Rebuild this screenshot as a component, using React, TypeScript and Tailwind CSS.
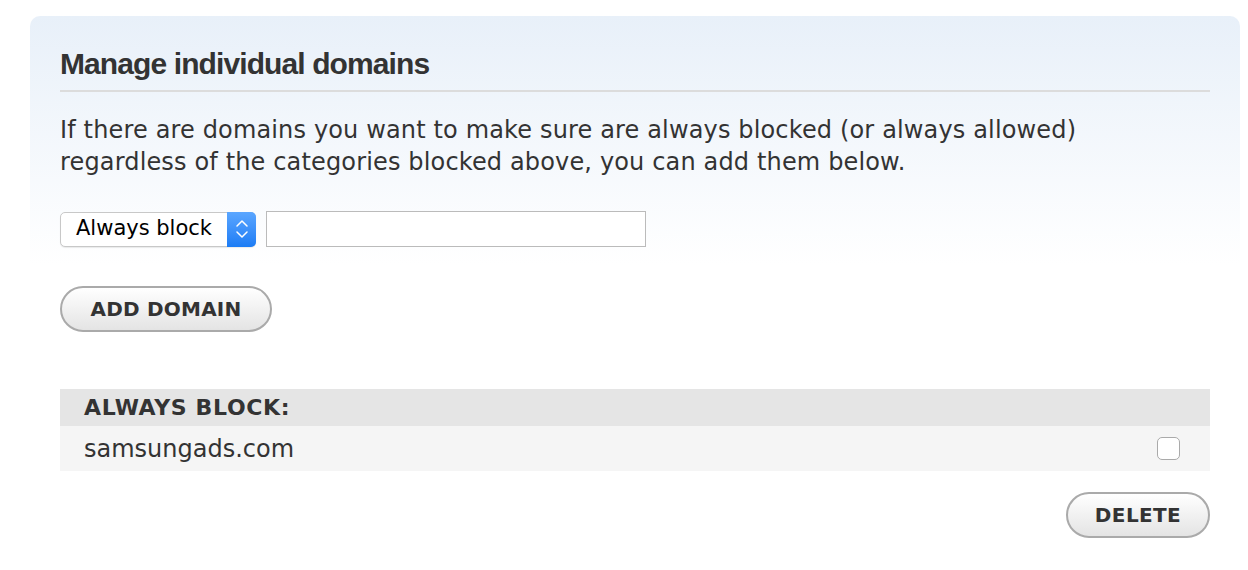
export default function App() {
  return (
    <div className="min-h-[570px] w-[1248px] bg-white pt-4 pl-[30px] pr-2">
      <div className="rounded-t-[10px] bg-gradient-to-b from-[#e8f0f9] to-white to-45% px-[30px] pb-8 pt-[30px]">
        {/* Heading */}
        <h2 className="border-b-2 border-[#dcdcdc] pb-2 font-['Liberation_Sans',Arial,sans-serif] text-[30px] font-bold leading-[36px] tracking-[-0.03em] text-[#333]">
          Manage individual domains
        </h2>
        <p className="mt-[22px] font-['DejaVu_Sans',Verdana,sans-serif] text-[24px] leading-[32px] tracking-[0.15px] text-[#333]">
          If there are domains you want to make sure are always blocked (or always allowed)
          <br />
          regardless of the categories blocked above, you can add them below.
        </p>

        {/* Add form */}
        <div className="mt-[33px] flex items-center gap-[10px]">
          <div className="flex h-[35px] w-[196px] items-center justify-between rounded-[5px] border border-[#c8c8c8] bg-white shadow-[0_1px_1px_rgba(0,0,0,0.08)]">
            <span className="pl-[15px] font-['DejaVu_Sans',Verdana,sans-serif] text-[21px] text-black">
              Always block
            </span>
            <div className="-mr-px flex h-[35px] w-[29px] items-center justify-center rounded-r-[5px] bg-gradient-to-b from-[#5aa6ff] to-[#1a7cf5]">
              <svg width="14" height="24" viewBox="0 0 14 24" fill="none" stroke="white" strokeWidth="1.5" strokeLinecap="round" strokeLinejoin="round">
                <path d="M2 9 L7 4 L12 9" />
                <path d="M2 15 L7 20 L12 15" />
              </svg>
            </div>
          </div>
          <input className="h-[36px] w-[380px] border border-[#bbb] bg-white outline-none" />
        </div>

        <button className="mt-[39px] flex h-[46px] w-[212px] items-center justify-center rounded-full border-2 border-[#aaa] bg-gradient-to-b from-white to-[#e4e4e4] font-['DejaVu_Sans',Verdana,sans-serif] text-[20px] font-bold tracking-[0.01em] text-[#333]">
          ADD DOMAIN
        </button>

        {/* Domain list */}
        <div className="mt-[57px]">
          <div className="flex h-[37px] items-center bg-[#e5e5e5] pl-6 font-['DejaVu_Sans',Verdana,sans-serif] text-[22px] font-bold tracking-[0.03em] text-[#333]">
            ALWAYS BLOCK:
          </div>
          <div className="flex h-[45px] items-center justify-between bg-[#f5f5f5] pl-6 pr-[30px]">
            <span className="font-['DejaVu_Sans',Verdana,sans-serif] text-[24px] text-[#333]">
              samsungads.com
            </span>
            <div className="h-[23px] w-[23px] rounded-[5px] border border-[#aaa] bg-white" />
          </div>
          <div className="flex justify-end">
            <button className="mt-[21px] flex h-[46px] w-[144px] items-center justify-center rounded-full border-2 border-[#aaa] bg-gradient-to-b from-white to-[#e4e4e4] font-['DejaVu_Sans',Verdana,sans-serif] text-[20px] font-bold tracking-[0.02em] text-[#333]">
              DELETE
            </button>
          </div>
        </div>
      </div>
    </div>
  );
}
